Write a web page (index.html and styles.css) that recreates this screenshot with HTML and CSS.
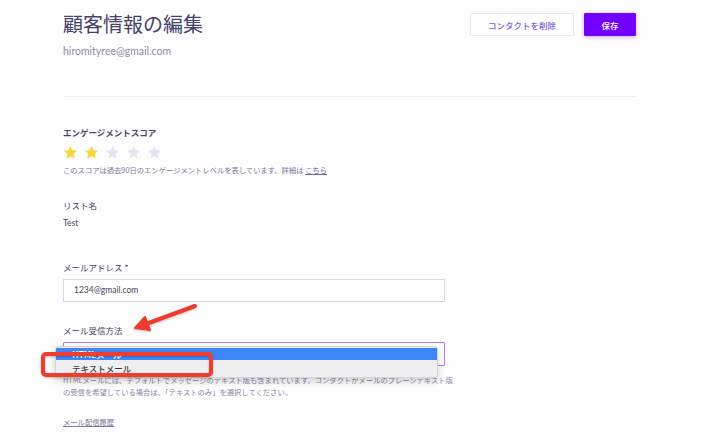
FILE: index.html
```html
<!DOCTYPE html>
<html lang="ja">
<head>
<meta charset="utf-8">
<title>顧客情報の編集</title>
<link rel="stylesheet" href="styles.css">
</head>
<body>
<div class="page">
  <header class="head">
    <div class="head-text">
      <h1 class="title">顧客情報の編集</h1>
      <div class="email">hiromityree@gmail.com</div>
    </div>
    <div class="actions">
      <button class="btn btn-outline">コンタクトを削除</button>
      <button class="btn btn-primary">保存</button>
    </div>
  </header>
  <div class="sep"></div>

  <section class="score">
    <div class="label label-strong">エンゲージメントスコア</div>
    <div class="stars">
      <svg class="star on" viewBox="0 0 24 24"><path d="M12 1.5l3.2 6.9 7.4.9-5.5 5.1 1.5 7.4L12 18.1l-6.6 3.7 1.5-7.4-5.5-5.1 7.4-.9z"/></svg>
      <svg class="star on" viewBox="0 0 24 24"><path d="M12 1.5l3.2 6.9 7.4.9-5.5 5.1 1.5 7.4L12 18.1l-6.6 3.7 1.5-7.4-5.5-5.1 7.4-.9z"/></svg>
      <svg class="star" viewBox="0 0 24 24"><path d="M12 1.5l3.2 6.9 7.4.9-5.5 5.1 1.5 7.4L12 18.1l-6.6 3.7 1.5-7.4-5.5-5.1 7.4-.9z"/></svg>
      <svg class="star" viewBox="0 0 24 24"><path d="M12 1.5l3.2 6.9 7.4.9-5.5 5.1 1.5 7.4L12 18.1l-6.6 3.7 1.5-7.4-5.5-5.1 7.4-.9z"/></svg>
      <svg class="star" viewBox="0 0 24 24"><path d="M12 1.5l3.2 6.9 7.4.9-5.5 5.1 1.5 7.4L12 18.1l-6.6 3.7 1.5-7.4-5.5-5.1 7.4-.9z"/></svg>
    </div>
    <p class="desc">このスコアは過去90日のエンゲージメントレベルを表しています。詳細は <a class="link" href="#">こちら</a></p>
  </section>

  <section class="list">
    <div class="label">リスト名</div>
    <div class="value">Test</div>
  </section>

  <section class="field field-mail">
    <div class="label">メールアドレス *</div>
    <div class="input">1234@gmail.com</div>
  </section>

  <section class="field field-method">
    <div class="label">メール受信方法</div>
    <div class="select-wrap">
      <div class="select"></div>
      <div class="dropdown">
        <div class="opt opt-active">HTMLメール</div>
        <div class="opt">テキストメール</div>
      </div>
    </div>
    <p class="help">HTMLメールには、デフォルトでメッセージのテキスト版も含まれています。コンタクトがメールのプレーンテキスト版<br>の受信を希望している場合は、「テキストのみ」を選択してください。</p>
  </section>

  <a class="history" href="#">メール配信履歴</a>
</div>

<svg class="annot" width="710" height="435" viewBox="0 0 710 435">
  <defs>
    <filter id="sh" x="-20%" y="-20%" width="140%" height="140%">
      <feDropShadow dx="0" dy="1" stdDeviation="1.2" flood-color="#000" flood-opacity="0.25"/>
    </filter>
  </defs>
  <g filter="url(#sh)">
    <line x1="195" y1="306" x2="146" y2="324" stroke="#ee3a2e" stroke-width="4" stroke-linecap="round"/>
    <path d="M135 328 L145 317 L150 330 Z" fill="#ee3a2e" stroke="#ee3a2e" stroke-width="2" stroke-linejoin="round"/>
    <rect x="43" y="354" width="168" height="21" rx="3" fill="none" stroke="#f23b2f" stroke-width="4"/>
  </g>
</svg>
</body>
</html>
```

FILE: styles.css
```css
html, body {
  margin: 0;
  padding: 0;
  background: #fdfdfe;
}

body {
  font-family: "Lato", "Noto Sans CJK JP", sans-serif;
  color: #3d3a5a;
  position: relative;
  width: 710px;
  height: 435px;
  overflow: hidden;
}

.page {
  margin-left: 63px;
  width: 573px;
}

.head {
  display: flex;
  justify-content: space-between;
  align-items: flex-start;
}

.title {
  margin: 12px 0 0;
  font-family: "Noto Sans CJK JP", sans-serif;
  font-size: 20px;
  line-height: 24px;
  font-weight: 400;
  color: #45426a;
}

.email {
  margin-top: 8px;
  font-size: 10.5px;
  line-height: 14px;
  color: #8e8ba8;
}

.actions {
  display: flex;
  gap: 10px;
  margin-top: 13px;
}

.btn {
  height: 23px;
  font-family: "Noto Sans CJK JP", sans-serif;
  font-size: 8.5px;
  font-weight: 500;
  padding: 0;
  border-radius: 1px;
  cursor: pointer;
}

.btn-outline {
  width: 104px;
  background: #ffffff;
  border: 1px solid #e9e5f7;
  color: #7d5fcf;
}

.btn-primary {
  width: 52px;
  background: #7300ff;
  border: 1px solid #7300ff;
  color: #ffffff;
  box-shadow: 0 1px 4px rgba(115, 0, 255, 0.35);
}

.sep {
  margin-top: 38px;
  height: 1px;
  background: #ededf2;
}

.label {
  font-family: "Noto Sans CJK JP", sans-serif;
  font-size: 8.5px;
  line-height: 12px;
  color: #46435f;
}

.label-strong {
  font-weight: 700;
  color: #4a4763;
}

.score {
  margin-top: 29px;
}

.stars {
  display: flex;
  gap: 6px;
  margin-top: 7px;
  height: 15px;
}

.star {
  width: 15px;
  height: 15px;
  fill: #e6e5ef;
}

.star.on {
  fill: #f6d83e;
}

.desc {
  margin: 5px 0 0;
  font-family: "Noto Sans CJK JP", sans-serif;
  font-size: 7.3px;
  line-height: 10px;
  color: #7c7996;
}

.link {
  color: #6a6790;
  text-decoration: underline;
}

.list {
  margin-top: 24px;
}

.value {
  margin-top: 6px;
  font-size: 8.5px;
  line-height: 12px;
  color: #4a4763;
}

.field-mail {
  margin-top: 32px;
}

.input {
  margin-top: 6px;
  width: 382px;
  height: 23px;
  box-sizing: border-box;
  border: 1px solid #d9d4ea;
  background: #ffffff;
  padding-left: 10px;
  font-size: 8.5px;
  line-height: 21px;
  color: #48455f;
}

.field-method {
  margin-top: 22px;
}

.select-wrap {
  position: relative;
  margin-top: 6px;
  width: 382px;
}

.select {
  height: 24px;
  box-sizing: border-box;
  border: 1.5px solid #b27cff;
  border-radius: 1px;
  background: #ffffff;
}

.dropdown {
  position: absolute;
  left: -8px;
  top: 4px;
  width: 383px;
  box-sizing: border-box;
  padding: 1px 0 2px;
  background: #efeff1;
  border: 1px solid #d3d3d8;
  border-radius: 4px;
  box-shadow: 0 3px 8px rgba(0, 0, 0, 0.18);
}

.opt {
  height: 12px;
  padding-left: 16px;
  font-family: "Noto Sans CJK JP", sans-serif;
  font-size: 8.5px;
  font-weight: 500;
  line-height: 12px;
  color: #3a3a3a;
}

.opt + .opt {
  height: 14px;
  line-height: 14px;
  padding-top: 1px;
}

.opt-active {
  background: #3c86f7;
  color: #ffffff;
  font-weight: 700;
}

.help {
  margin: 8px 0 0;
  font-family: "Noto Sans CJK JP", sans-serif;
  font-size: 7.3px;
  line-height: 12px;
  color: #8a87a3;
  white-space: nowrap;
}

.history {
  display: inline-block;
  margin-top: 18px;
  font-family: "Noto Sans CJK JP", sans-serif;
  font-size: 7.3px;
  line-height: 12px;
  color: #7c7996;
  text-decoration: underline;
}

.annot {
  position: absolute;
  left: 0;
  top: 0;
  pointer-events: none;
}
```
